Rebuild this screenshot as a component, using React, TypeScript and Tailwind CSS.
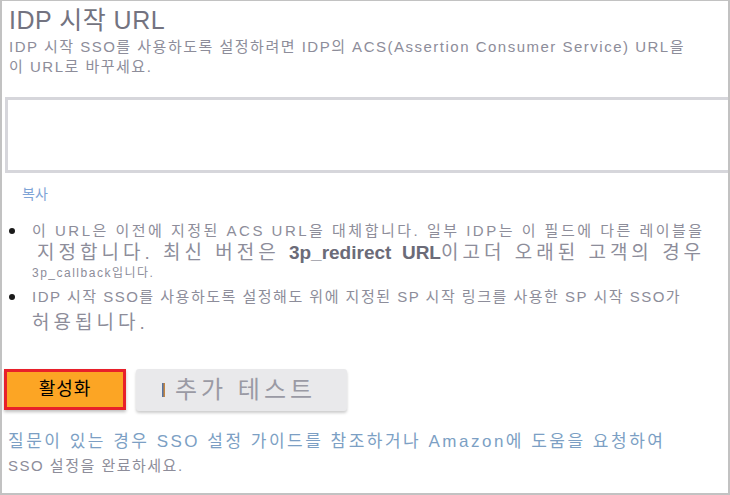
const font = "font-['Liberation_Sans','Noto_Sans_CJK_KR',sans-serif]";

function Bullet({ children }: { children: React.ReactNode }) {
  return (
    <div className="flex">
      <div className="w-[30px] shrink-0 pl-[7px] pt-[7px]">
        <div className="h-[6px] w-[6px] rounded-full bg-[#1a1a1a]" />
      </div>
      <div className="whitespace-nowrap">{children}</div>
    </div>
  );
}

export default function App() {
  return (
    <div
      className={`${font} h-[495px] w-[730px] overflow-hidden border-2 border-t border-[#c2c2c2] bg-white`}
    >
      <div className="pl-[7px] pt-[4px]">
        <h1 className="text-[25px] leading-[30px] tracking-[0.5px] text-[#737380]">IDP 시작 URL</h1>
        <p className="mt-[2px] whitespace-nowrap text-[15px] leading-[20px] tracking-[1.5px] text-[#8d8d9a]">
          IDP 시작 SSO를 사용하도록 설정하려면 IDP의 ACS(Assertion Consumer Service) URL을
          <br />이 URL로 바꾸세요.
        </p>
      </div>

      <div className="ml-[3px] mt-[20px] h-[76px] border-[3px] border-r-0 border-[#d6d6db] bg-white" />

      <div className="ml-[20px] mt-[12px] text-[14px] leading-[18px] text-[#7fa4d6]">복사</div>

      <div className="mt-[18px] text-[#8d8d9a]">
        <Bullet>
          <div className="text-[15px] leading-[19px] tracking-[2.5px]">
            이 URL은 이전에 지정된 ACS URL을 대체합니다. 일부 IDP는 이 필드에 다른 레이블을
          </div>
          <div className="mt-[1px] pl-[5px] text-[19px] leading-[24px] tracking-[4px]">
            지정합니다. 최신 버전은{" "}
            <span className="font-bold tracking-normal text-[#6b6b78]">3p_redirect&nbsp; URL</span>
            이고더 오래된 고객의 경우
          </div>
          <div className="mt-[1px] text-[12px] leading-[15px] tracking-[1.5px]">3p_callback입니다.</div>
        </Bullet>
        <div className="mt-[6px]">
          <Bullet>
            <div className="text-[15px] leading-[19px] tracking-[1.5px]">
              IDP 시작 SSO를 사용하도록 설정해도 위에 지정된 SP 시작 링크를 사용한 SP 시작 SSO가
            </div>
            <div className="mt-[5px] text-[19px] leading-[24px] tracking-[4px]">허용됩니다.</div>
          </Bullet>
        </div>
      </div>

      <div className="ml-[2px] mt-[34px] flex items-start gap-[10px]">
        <button className="flex h-[41px] w-[122px] items-center justify-center border-[3px] border-[#e8202a] bg-[#fca524] text-[18px] tracking-[1px] text-black shadow-[0_2px_3px_rgba(0,0,0,0.25)]">
          활성화
        </button>
        <button className="flex h-[42px] w-[211px] items-center gap-[10px] rounded-[3px] bg-[#e9e9eb] pl-[26px] text-[24px] tracking-[4px] text-[#9a9aa4] shadow-[0_2px_3px_rgba(0,0,0,0.2)]">
          <span className="h-[14px] w-[3px] bg-[linear-gradient(90deg,#3b6fb8,#e08a2a)]" />
          추가 테스트
        </button>
      </div>

      <div className="ml-[6px] mt-[19px] whitespace-nowrap">
        <div className="text-[17px] leading-[23px] tracking-[2.5px] text-[#7c9fc4]">
          질문이 있는 경우 SSO 설정 가이드를 참조하거나 Amazon에 도움을 요청하여
        </div>
        <div className="mt-[3px] text-[15px] leading-[20px] tracking-[1.5px] text-[#8d8d9a]">SSO 설정을 완료하세요.</div>
      </div>
    </div>
  );
}
